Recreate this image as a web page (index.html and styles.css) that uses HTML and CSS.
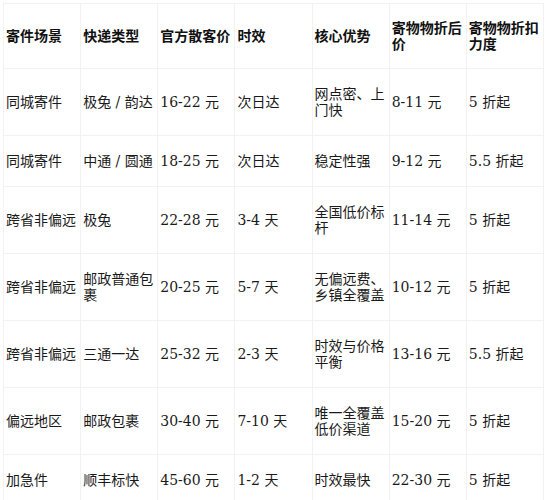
FILE: index.html
```html
<!DOCTYPE html>
<html lang="zh-CN">
<head>
<meta charset="utf-8">
<link rel="stylesheet" href="styles.css">
</head>
<body>
<table class="price-table">
  <thead>
    <tr>
      <th>寄件场景</th>
      <th>快递类型</th>
      <th>官方散客价</th>
      <th>时效</th>
      <th>核心优势</th>
      <th>寄物物折后价</th>
      <th>寄物物折扣力度</th>
    </tr>
  </thead>
  <tbody>
    <tr><td>同城寄件</td><td>极兔 / 韵达</td><td>16-22 元</td><td>次日达</td><td>网点密、上门快</td><td>8-11 元</td><td>5 折起</td></tr>
    <tr><td>同城寄件</td><td>中通 / 圆通</td><td>18-25 元</td><td>次日达</td><td>稳定性强</td><td>9-12 元</td><td>5.5 折起</td></tr>
    <tr><td>跨省非偏远</td><td>极兔</td><td>22-28 元</td><td>3-4 天</td><td>全国低价标杆</td><td>11-14 元</td><td>5 折起</td></tr>
    <tr><td>跨省非偏远</td><td>邮政普通包裹</td><td>20-25 元</td><td>5-7 天</td><td>无偏远费、乡镇全覆盖</td><td>10-12 元</td><td>5 折起</td></tr>
    <tr><td>跨省非偏远</td><td>三通一达</td><td>25-32 元</td><td>2-3 天</td><td>时效与价格平衡</td><td>13-16 元</td><td>5.5 折起</td></tr>
    <tr><td>偏远地区</td><td>邮政包裹</td><td>30-40 元</td><td>7-10 天</td><td>唯一全覆盖低价渠道</td><td>15-20 元</td><td>5 折起</td></tr>
    <tr><td>加急件</td><td>顺丰标快</td><td>45-60 元</td><td>1-2 天</td><td>时效最快</td><td>22-30 元</td><td>5 折起</td></tr>
  </tbody>
</table>
</body>
</html>
```

FILE: styles.css
```css
html, body {
  margin: 0;
  padding: 0;
  background: #ffffff;
}

body {
  font-family: "DejaVu Serif", "Noto Sans CJK SC", serif;
  font-size: 14px;
  color: #1a1a1a;
}

.price-table {
  margin: 3px 0 0 3px;
  width: 541px;
  table-layout: fixed;
  border-collapse: collapse;
}

.price-table th,
.price-table td {
  border: 1px solid #f2f2f2;
  padding: 17px 2px 17px 2px;
  line-height: 16px;
  text-align: left;
  vertical-align: middle;
  word-break: break-all;
  color: #1a1a1a;
}

.price-table th {
  font-weight: bold;
  color: #111111;
  padding-top: 16px;
  padding-bottom: 16px;
}
```
